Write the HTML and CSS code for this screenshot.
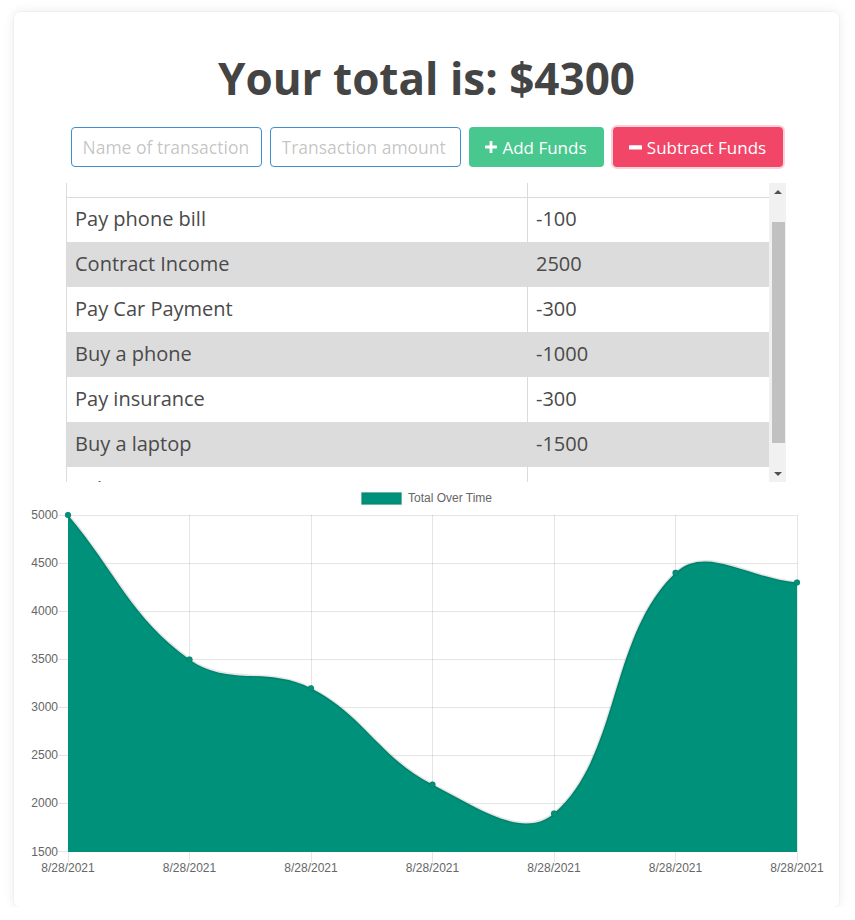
FILE: index.html
```html
<!DOCTYPE html>
<html lang="en">
<head>
<meta charset="utf-8">
<title>Budget Tracker</title>
<link rel="stylesheet" href="styles.css">
</head>
<body>
<main class="card">
  <h1 class="total">Your total is: $<span>4300</span></h1>
  <form class="controls">
    <input class="field" type="text" placeholder="Name of transaction">
    <input class="field" type="text" inputmode="decimal" placeholder="Transaction amount">
    <button class="btn btn-add" type="button">
      <svg class="ico" width="12" height="12" viewBox="0 0 12 12"><path d="M4.6 0.6Q4.6 0 5.2 0H6.8Q7.4 0 7.4 0.6V4.6H11.4Q12 4.6 12 5.2V6.8Q12 7.4 11.4 7.4H7.4V11.4Q7.4 12 6.8 12H5.2Q4.6 12 4.6 11.4V7.4H0.6Q0 7.4 0 6.8V5.2Q0 4.6 0.6 4.6H4.6Z" fill="#fff"/></svg>
      <span>Add Funds</span>
    </button>
    <button class="btn btn-sub" type="button">
      <svg class="ico" width="13" height="5" viewBox="0 0 13 5"><rect x="0" y="0.2" width="13" height="4.4" rx="0.6" fill="#fff"/></svg>
      <span>Subtract Funds</span>
    </button>
  </form>
  <div class="ledger">
    <div class="ledger-view">
      <table class="ledger-table">
        <colgroup><col class="c-name"><col class="c-amt"></colgroup>
        <thead><tr><th></th><th></th></tr></thead>
        <tbody>
          <tr><td>Pay phone bill</td><td>-100</td></tr>
          <tr><td>Contract Income</td><td>2500</td></tr>
          <tr><td>Pay Car Payment</td><td>-300</td></tr>
          <tr><td>Buy a phone</td><td>-1000</td></tr>
          <tr><td>Pay insurance</td><td>-300</td></tr>
          <tr><td>Buy a laptop</td><td>-1500</td></tr>
          <tr><td>Salary</td><td>5000</td></tr>
        </tbody>
      </table>
    </div>
    <div class="scrollbar" aria-hidden="true">
      <div class="sb-btn"><svg width="8" height="4" viewBox="0 0 8 4"><path d="M0 4L4 0L8 4Z" fill="#505050"/></svg></div>
      <div class="sb-track"><div class="sb-thumb"></div></div>
      <div class="sb-btn"><svg width="8" height="4" viewBox="0 0 8 4"><path d="M0 0L8 0L4 4Z" fill="#505050"/></svg></div>
    </div>
  </div>
  <svg class="chart" width="825" height="413" viewBox="14 482 825 413">
    <g class="legend">
      <rect x="361.5" y="492.5" width="40" height="12" fill="#00917a" stroke="rgba(0,0,0,0.1)" stroke-width="1.5"/>
      <text x="408" y="502">Total Over Time</text>
    </g>
    <g class="grid" stroke="rgba(0,0,0,0.1)" stroke-width="1">
      <path d="M58 515.5H797.5M58 563.5H797.5M58 611.5H797.5M58 659.5H797.5M58 707.5H797.5M58 755.5H797.5M58 803.5H797.5M58 851.5H797.5"/>
      <path d="M68.5 515V862M189.5 515V862M311.5 515V862M432.5 515V862M554.5 515V862M675.5 515V862M797.5 515V862"/>
    </g>
    <g class="ylab">
      <text x="58" y="519">5000</text>
      <text x="58" y="567">4500</text>
      <text x="58" y="615">4000</text>
      <text x="58" y="663">3500</text>
      <text x="58" y="711">3000</text>
      <text x="58" y="759">2500</text>
      <text x="58" y="807">2000</text>
      <text x="58" y="856">1500</text>
    </g>
    <g class="xlab">
      <text x="68" y="872">8/28/2021</text>
      <text x="189.5" y="872">8/28/2021</text>
      <text x="311" y="872">8/28/2021</text>
      <text x="432.5" y="872">8/28/2021</text>
      <text x="554" y="872">8/28/2021</text>
      <text x="675.5" y="872">8/28/2021</text>
      <text x="797" y="872">8/28/2021</text>
    </g>
    <path class="area" d="M68,515 C116.6,572.8 131.0,617.7 189.5,659.4 C228.2,687.0 267.6,666.0 311,688.3 C364.8,716.0 378.7,756.9 432.5,784.6 C475.9,807.0 523.2,840.3 554,813.5 C620.4,755.6 608.6,636.5 675.5,572.8 C705.8,544.0 748.4,578.6 797,582.4 L797,852 L68,852 Z"/>
    <path class="line" d="M68,515 C116.6,572.8 131.0,617.7 189.5,659.4 C228.2,687.0 267.6,666.0 311,688.3 C364.8,716.0 378.7,756.9 432.5,784.6 C475.9,807.0 523.2,840.3 554,813.5 C620.4,755.6 608.6,636.5 675.5,572.8 C705.8,544.0 748.4,578.6 797,582.4"/>
    <g class="pts">
      <circle cx="68" cy="515" r="3"/>
      <circle cx="189.5" cy="659.4" r="3"/>
      <circle cx="311" cy="688.3" r="3"/>
      <circle cx="432.5" cy="784.6" r="3"/>
      <circle cx="554" cy="813.5" r="3"/>
      <circle cx="675.5" cy="572.8" r="3"/>
      <circle cx="797" cy="582.4" r="3"/>
    </g>
  </svg>
</main>
<script src="script.js"></script>
</body>
</html>
```

FILE: styles.css
```css
* { box-sizing: border-box; }

body {
  margin: 0;
  background: #fff;
  font-family: "Open Sans", "Noto Sans", sans-serif;
  color: #4a4a4a;
}

.card {
  margin: 12px 16px 0 14px;
  height: 895px;
  background: #fff;
  border-radius: 6px;
  box-shadow: 0 0 12px rgba(0, 0, 0, 0.09), 0 0 0 1px rgba(10, 10, 10, 0.02);
  padding: 40px 0 12px;
}

.total {
  margin: 0;
  text-align: center;
  font-size: 44px;
  font-weight: 700;
  line-height: 53px;
  color: #444;
}

.controls {
  display: flex;
  justify-content: center;
  gap: 8px;
  margin: 22px 0 0;
  height: 40px;
}

.field {
  width: 191px;
  height: 40px;
  border: 1px solid #3e8ed0;
  border-radius: 4px;
  padding: 0 10px 0 11px;
  font: 400 17.5px "Open Sans", sans-serif;
  color: #363636;
  outline: none;
  background: #fff;
}

.field::placeholder { color: rgba(54, 54, 54, 0.3); }

.btn {
  height: 40px;
  border: none;
  border-radius: 4px;
  color: #fff;
  font: 500 17px "Open Sans", sans-serif;
  display: flex;
  align-items: center;
  justify-content: center;
  gap: 5px;
  padding: 0;
  cursor: pointer;
}

.ico { display: block; flex: none; }

.btn-add { width: 135px; background: #48c78e; }

.btn-sub {
  width: 170px;
  margin-left: 1px;
  background: #f14668;
  box-shadow: 0 0 0 2px rgba(241, 70, 104, 0.25);
}

.ledger {
  display: flex;
  width: 720px;
  height: 299px;
  margin: 16px 0 0 52px;
}

.ledger-view {
  flex: 1;
  min-width: 0;
  overflow: hidden;
}

.scrollbar {
  width: 17px;
  flex: none;
  display: flex;
  flex-direction: column;
  background: #f1f1f1;
}

.sb-btn {
  height: 17px;
  flex: none;
  display: flex;
  align-items: center;
  justify-content: center;
  padding-left: 1px;
}

.sb-btn svg { display: block; }

.sb-track {
  flex: 1;
  padding: 22px 1px 0 3px;
}

.sb-thumb {
  height: 221px;
  background: #c1c1c1;
}

.ledger-table {
  width: 100%;
  border-collapse: collapse;
  table-layout: fixed;
  font-size: 20px;
}

.c-name { width: 461px; }

.ledger-table th,
.ledger-table td {
  border-left: 1px solid #dbdbdb;
  padding: 0 8px 2px;
  text-align: left;
  vertical-align: middle;
  font-weight: 400;
  white-space: nowrap;
}

.ledger-table thead tr { height: 44px; }
.ledger-table th { border-bottom: 1px solid #dbdbdb; }
.ledger-table tbody tr { height: 45px; }
.ledger-table tbody tr:nth-child(even) { background: #dcdcdc; }

.chart { display: block; }

.chart text {
  font-family: "Liberation Sans", Arial, sans-serif;
  font-size: 12px;
  fill: #666;
}

.chart .ylab text { text-anchor: end; }
.chart .xlab text { text-anchor: middle; }

.chart .area { fill: #00917a; }
.chart .line { fill: none; stroke: rgba(0, 0, 0, 0.1); stroke-width: 3; }
.chart .pts circle { fill: #00917a; stroke: rgba(0, 0, 0, 0.1); stroke-width: 1; }
```

FILE: script.js
```js
document.querySelector('.ledger-view').scrollTop = 30;
```
